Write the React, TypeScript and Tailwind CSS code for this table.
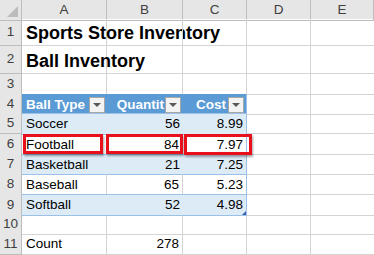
import React from "react";

const COLS = ["A", "B", "C", "D", "E"];
const GRID = "grid grid-cols-[22px_85px_76px_64px_64px_63px]";

type Row = { n: number; h: string; cells: React.ReactNode[]; band?: "head" | "blue" | "white" };

function Filter() {
  return (
    <span className="flex h-[16px] w-[16px] shrink-0 items-center justify-center border border-[#a6a6a6] bg-[#f3f3f3]">
      <span className="h-0 w-0 border-x-[4px] border-t-[4px] border-x-transparent border-t-[#595959]" />
    </span>
  );
}

const rows: Row[] = [
  {
    n: 1,
    h: "h-[27px]",
    cells: [<span className="whitespace-nowrap text-[18px] leading-none font-bold text-black">Sports Store Inventory</span>],
  },
  {
    n: 2,
    h: "h-[28px]",
    cells: [<span className="whitespace-nowrap text-[18px] leading-none font-bold text-black">Ball Inventory</span>],
  },
  { n: 3, h: "h-[20px]", cells: [] },
  { n: 4, h: "h-[19px]", cells: [], band: "head" },
  { n: 5, h: "h-[21px]", cells: ["Soccer", "56", "8.99"], band: "blue" },
  { n: 6, h: "h-[20px]", cells: ["Football", "84", "7.97"], band: "white" },
  { n: 7, h: "h-[20px]", cells: ["Basketball", "21", "7.25"], band: "blue" },
  { n: 8, h: "h-[20px]", cells: ["Baseball", "65", "5.23"], band: "white" },
  { n: 9, h: "h-[20px]", cells: ["Softball", "52", "4.98"], band: "blue" },
  { n: 10, h: "h-[20px]", cells: [] },
  { n: 11, h: "h-[20px]", cells: ["Count", "278"] },
];

export default function App() {
  return (
    <div className="relative h-[255px] w-[374px] overflow-hidden bg-white font-['Liberation_Sans',Arial,sans-serif] text-[13.5px] text-black">
      {/* column headers */}
      <div className={`${GRID} h-[19px] bg-[#e6e6e6] text-[#404040]`}>
        <div className="relative border-r border-b border-[#bdbdbd]">
          <span className="absolute right-[3px] bottom-[3px] h-0 w-0 border-l-[11px] border-b-[11px] border-l-transparent border-b-[#bcbcbc]" />
        </div>
        {COLS.map((c) => (
          <div key={c} className="flex items-center justify-center border-r border-b border-[#bdbdbd]">
            {c}
          </div>
        ))}
      </div>

      {rows.map((r) => (
        <div key={r.n} className={`${GRID} ${r.h}`}>
          <div className="flex items-center justify-center border-r border-b border-[#bdbdbd] bg-[#e6e6e6] text-[#404040]">
            {r.n}
          </div>
          {r.band === "head" ? (
            <>
              <div className="flex items-center justify-between bg-[#5b9bd5] pl-[4px] pr-[2px] font-bold text-white">
                <span>Ball Type</span>
                <Filter />
              </div>
              <div className="flex items-center justify-end gap-[1px] overflow-hidden bg-[#5b9bd5] pr-[2px] font-bold text-white">
                <span className="whitespace-nowrap">Quantit</span>
                <Filter />
              </div>
              <div className="flex items-center justify-end gap-[2px] border-r border-[#9bc2e6] bg-[#5b9bd5] pr-[2px] font-bold text-white">
                <span>Cost</span>
                <Filter />
              </div>
              <div className="border-r border-b border-[#d4d4d4]" />
              <div className="border-b border-[#d4d4d4]" />
            </>
          ) : r.band ? (
            <>
              {[0, 1, 2].map((i) => (
                <div
                  key={i}
                  className={`relative flex items-center border-t border-[#9bc2e6] ${r.n === 9 ? "border-b" : ""} ${
                    r.band === "blue" ? "bg-[#ddebf7]" : "bg-white"
                  } ${i === 0 ? "pl-[4px]" : "justify-end pr-[3px]"} ${
                    i === 2 ? "border-r border-r-[#9bc2e6]" : r.band === "white" ? "border-r border-r-[#d4d4d4]" : ""
                  }`}
                >
                  {r.cells[i]}
                  {r.n === 9 && i === 2 && (
                    <span className="absolute right-0 bottom-0 h-0 w-0 border-l-[4px] border-b-[4px] border-l-transparent border-b-[#3a5fb0]" />
                  )}
                </div>
              ))}
              <div className="border-r border-b border-[#d4d4d4]" />
              <div className="border-b border-[#d4d4d4]" />
            </>
          ) : (
            <>
              {[0, 1, 2, 3, 4].map((i) => (
                <div
                  key={i}
                  className={`flex border-b border-[#d4d4d4] ${i < 4 ? "border-r" : ""} ${
                    i === 1 ? "justify-end pr-[3px]" : "pl-[4px]"
                  } ${r.n <= 2 ? "items-end pb-[3px]" : "items-center"}`}
                >
                  {r.cells[i]}
                </div>
              ))}
            </>
          )}
        </div>
      ))}

      {/* red highlight boxes over row 6 */}
      <div className="absolute left-[23px] top-[134px] h-[20px] w-[80px] border-[3px] border-[#e8111b] shadow-[1px_2px_2px_rgba(0,0,0,0.35)]" />
      <div className="absolute left-[106px] top-[134px] h-[20px] w-[77px] border-[3px] border-[#e8111b] shadow-[1px_2px_2px_rgba(0,0,0,0.35)]" />
      <div className="absolute left-[184px] top-[134px] h-[21px] w-[68px] border-[3px] border-[#e8111b] shadow-[1px_2px_2px_rgba(0,0,0,0.35)]" />
    </div>
  );
}
